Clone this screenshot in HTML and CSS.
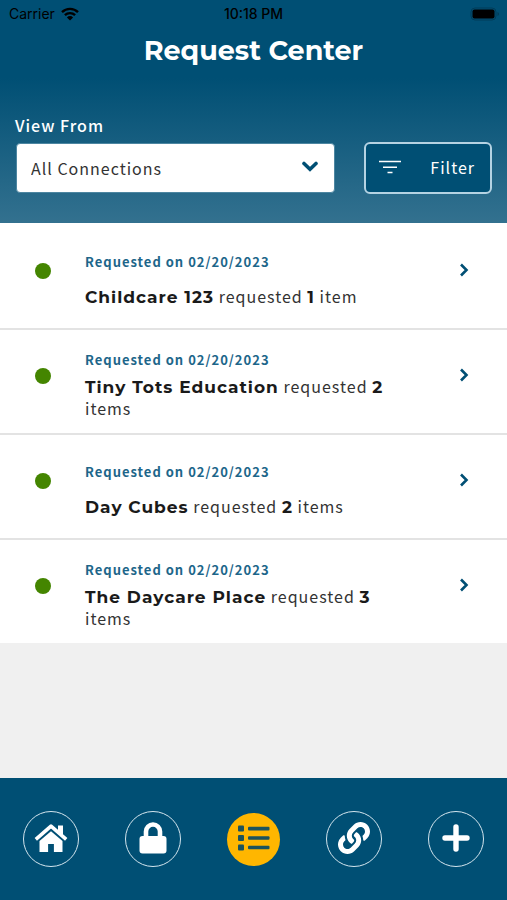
FILE: index.html
```html
<!DOCTYPE html>
<html lang="en">
<head>
<meta charset="utf-8">
<meta name="viewport" content="width=device-width, initial-scale=1">
<title>Request Center</title>
<link rel="stylesheet" href="styles.css">
</head>
<body>
<header class="header">
  <div class="status">
    <span class="carrier">Carrier
      <svg width="18" height="14" viewBox="0 0 18 14" aria-hidden="true"><g fill="none" stroke="#000" stroke-width="2.4"><path d="M1 5.2a11.4 11.4 0 0 1 16 0"/><path d="M3.9 8.2a7.3 7.3 0 0 1 10.2 0"/></g><path d="M9 13.6 5.9 10.4a4.4 4.4 0 0 1 6.2 0z"/></svg>
    </span>
    <span class="time">10:18 PM</span>
    <svg class="battery" width="30" height="14" viewBox="0 0 30 14" aria-hidden="true"><rect x="1" y="1" width="25" height="12" rx="4" fill="none" stroke="#003c58"/><rect x="2.500" y="2.500" width="22" height="9" rx="2"/><path d="M27.500 5v4q1.500-.5 1.500-2t-1.500-2" fill="#003c58"/></svg>
  </div>
  <h1 class="title">Request Center</h1>
  <label class="label" for="connection">View From</label>
  <div class="controls">
    <div class="picker">
      <select id="connection"><option>All Connections</option></select>
      <svg class="arrow" width="16" height="11" viewBox="0 0 16 11" aria-hidden="true"><path d="m2 2.500 6 5.700 6-5.700" fill="none" stroke="#004f74" stroke-width="3.600" stroke-linecap="round"/></svg>
    </div>
    <button class="filter" type="button">
      <svg width="22" height="14" viewBox="0 0 22 14" aria-hidden="true"><path d="M0 1.500h22M4 7.200h14M8.500 12.500h5" stroke="#fff" stroke-width="1.600"/></svg>
      <span>Filter</span>
    </button>
  </div>
</header>

<main class="list">
  <a class="row" href="#childcare">
    <span class="dot"></span>
    <span class="info"><span class="date">Requested on 02/20/2023</span><span class="text"><b>Childcare 123</b> requested <b>1</b> item</span></span>
    <svg class="chevron" width="10" height="14" viewBox="0 0 10 14" aria-hidden="true"><path d="m2 1.500 5.500 5.500L2 12.500"/></svg>
  </a>
  <a class="row" href="#tiny-tots">
    <span class="dot"></span>
    <span class="info"><span class="date">Requested on 02/20/2023</span><span class="text"><b>Tiny Tots Education</b> requested <b>2</b> items</span></span>
    <svg class="chevron" width="10" height="14" viewBox="0 0 10 14" aria-hidden="true"><path d="m2 1.500 5.500 5.500L2 12.500"/></svg>
  </a>
  <a class="row" href="#day-cubes">
    <span class="dot"></span>
    <span class="info"><span class="date">Requested on 02/20/2023</span><span class="text"><b>Day Cubes</b> requested <b>2</b> items</span></span>
    <svg class="chevron" width="10" height="14" viewBox="0 0 10 14" aria-hidden="true"><path d="m2 1.500 5.500 5.500L2 12.500"/></svg>
  </a>
  <a class="row" href="#daycare-place">
    <span class="dot"></span>
    <span class="info"><span class="date">Requested on 02/20/2023</span><span class="text"><b>The Daycare Place</b> requested <b>3</b> items</span></span>
    <svg class="chevron" width="10" height="14" viewBox="0 0 10 14" aria-hidden="true"><path d="m2 1.500 5.500 5.500L2 12.500"/></svg>
  </a>
</main>

<nav class="tabs">
  <a class="tab" href="#home" aria-label="Home"><svg width="34" height="30" viewBox="0 0 34 30"><path d="M24 1.500h5v10l-5-5z"/><path d="M1.800 15.300 17 2.200l15.200 13.100" fill="none" stroke="#fff" stroke-width="3.600" stroke-linejoin="round"/><path d="M17 7.200 28.500 17v11h-8.600v-8h-5.800v8H5.500V17z"/></svg></a>
  <a class="tab" href="#security" aria-label="Security"><svg width="28" height="34" viewBox="0 0 28 34"><path d="M7 15V9.500a7 7 0 0 1 14 0V15" fill="none" stroke="#fff" stroke-width="4.600"/><rect x="0.500" y="14" width="27" height="17.500" rx="3"/></svg></a>
  <a class="tab active" href="#requests" aria-label="Requests"><svg width="32" height="28" viewBox="0 0 32 28"><g fill="#1d535c"><rect y="0.500" width="6" height="6" rx="1"/><rect y="10" width="6" height="6" rx="1"/><rect y="19.500" width="6" height="6" rx="1"/><rect x="10" y="1.800" width="21.500" height="3.600" rx="1"/><rect x="10" y="11.200" width="21.500" height="3.600" rx="1"/><rect x="10" y="20.700" width="21.500" height="3.600" rx="1"/></g></svg></a>
  <a class="tab" href="#links" aria-label="Links"><svg width="32" height="34" viewBox="0 0 512 544"><path d="M326.612 185.391c59.747 59.809 58.927 155.698.36 214.590-.11.120-.240.250-.360.370l-67.200 67.200c-59.270 59.270-155.699 59.262-214.960 0-59.270-59.260-59.270-155.700 0-214.960l37.106-37.106c9.840-9.840 26.786-3.300 27.294 10.606.648 17.722 3.826 35.527 9.690 52.721 1.986 5.822.567 12.262-3.783 16.612l-13.087 13.087c-28.026 28.026-28.905 73.660-1.155 101.960 28.024 28.579 74.086 28.749 102.325.510l67.200-67.190c28.191-28.191 28.073-73.757 0-101.830-3.701-3.694-7.429-6.564-10.341-8.569a16.037 16.037 0 0 1-6.947-12.606c-.396-10.567 3.348-21.456 11.698-29.806l21.054-21.055c5.521-5.521 14.182-6.199 20.584-1.731a152.482 152.482 0 0 1 20.522 17.197zM467.547 44.449c-59.261-59.262-155.690-59.270-214.960 0l-67.200 67.200c-.120.120-.250.250-.360.370-58.566 58.892-59.387 154.781.360 214.590a152.454 152.454 0 0 0 20.521 17.196c6.402 4.468 15.064 3.789 20.584-1.731l21.054-21.055c8.350-8.350 12.094-19.239 11.698-29.806a16.037 16.037 0 0 0-6.947-12.606c-2.912-2.005-6.640-4.875-10.341-8.569-28.073-28.073-28.191-73.639 0-101.830l67.200-67.190c28.239-28.239 74.300-28.069 102.325.510 27.750 28.300 26.872 73.934-1.155 101.960l-13.087 13.087c-4.350 4.350-5.769 10.790-3.783 16.612 5.864 17.194 9.042 34.999 9.690 52.721.509 13.906 17.454 20.446 27.294 10.606l37.106-37.106c59.271-59.259 59.271-155.699.001-214.959z"/></svg></a>
  <a class="tab" href="#add" aria-label="Add"><svg width="28" height="30" viewBox="0 0 28 30"><path d="M14 3v22M3 14h22" stroke="#fff" stroke-width="5.400" stroke-linecap="round"/></svg></a>
</nav>
</body>
</html>
```
FILE: styles.css
```css
* {
  box-sizing: border-box;
}

body {
  margin: 0;
  min-height: 100vh;
  display: flex;
  flex-direction: column;
  background: #f0f0f0;
  color: #333;
  font: 16px/22px "Noto Sans CJK SC", "Noto Sans", sans-serif;
  letter-spacing: 1px;
}

svg {
  display: block;
}

.header {
  padding: 0 15px 29px;
  background: linear-gradient(#004f74 35%, #33718f);
}

.status {
  display: grid;
  grid-template-columns: 1fr auto 1fr;
  align-items: center;
  height: 28px;
  margin: 0 -8px;
  color: #000;
  font-family: Inter, sans-serif;
  font-size: 14px;
  letter-spacing: 0;
}

.carrier {
  display: flex;
  align-items: center;
  gap: 6px;
  padding-left: 2px;
}

.time {
  font-weight: 500;
}

.battery {
  justify-self: end;
}

.title {
  margin: 5px 0 46px;
  color: #fff;
  font: 700 27px/36px Montserrat, Inter, sans-serif;
  letter-spacing: 0;
  text-align: center;
}

.label {
  display: block;
  height: 20px;
  margin-bottom: 7px;
  color: #fff;
  font-weight: 500;
  line-height: 20px;
}

.controls {
  display: flex;
  align-items: center;
  gap: 29px;
  padding-left: 1px;
}

.picker {
  position: relative;
  flex: 1;
}

.picker select {
  display: block;
  width: 100%;
  height: 50px;
  padding: 0 14px 1px;
  appearance: none;
  border: 1px solid #4d86a1;
  border-radius: 4px;
  background: #fff;
  color: #333;
  font: inherit;
  letter-spacing: inherit;
}

.arrow {
  position: absolute;
  top: 18px;
  right: 17px;
  pointer-events: none;
}

.filter {
  display: flex;
  align-items: center;
  justify-content: space-between;
  width: 128px;
  height: 52px;
  padding: 0 15px 2px 13px;
  border: 2px solid #b5d3e3;
  border-radius: 6px;
  background: #004f74;
  color: #fff;
  font: inherit;
  letter-spacing: inherit;
}

.list {
  flex: 1;
}

.row {
  display: grid;
  grid-template-columns: 85px 1fr 86px;
  min-height: 105px;
  border-top: 2px solid #e3e3e3;
  background: #fff;
  color: inherit;
  text-decoration: none;
}

.row:first-child {
  border-top-color: #fff;
}

.dot {
  place-self: center;
  width: 16px;
  height: 16px;
  margin-bottom: 12px;
  border-radius: 50%;
  background: #448500;
}

.info {
  display: flex;
  flex-direction: column;
  justify-content: space-evenly;
  padding: 15px 24px 9px 0;
}

.date {
  color: #1d668a;
  font-size: 13px;
  font-weight: 700;
  line-height: 20px;
}

.text b {
  color: #1a1a1a;
  font-family: Montserrat, Inter, sans-serif;
  font-size: 17px;
  font-weight: 700;
  line-height: 16px;
}

.chevron {
  place-self: center;
  margin-bottom: 14px;
  fill: none;
  stroke: #004f74;
  stroke-width: 2.6;
}

.tabs {
  display: flex;
  height: 122px;
  align-items: center;
  justify-content: space-around;
  background: #004f74;
}

.tab {
  display: grid;
  place-items: center;
  width: 56px;
  height: 56px;
  border: 1px solid #d3e5ee;
  border-radius: 50%;
  fill: #fff;
}

.tab.active {
  width: 53px;
  height: 53px;
  border: 0;
  background: #ffb600;
}
```
